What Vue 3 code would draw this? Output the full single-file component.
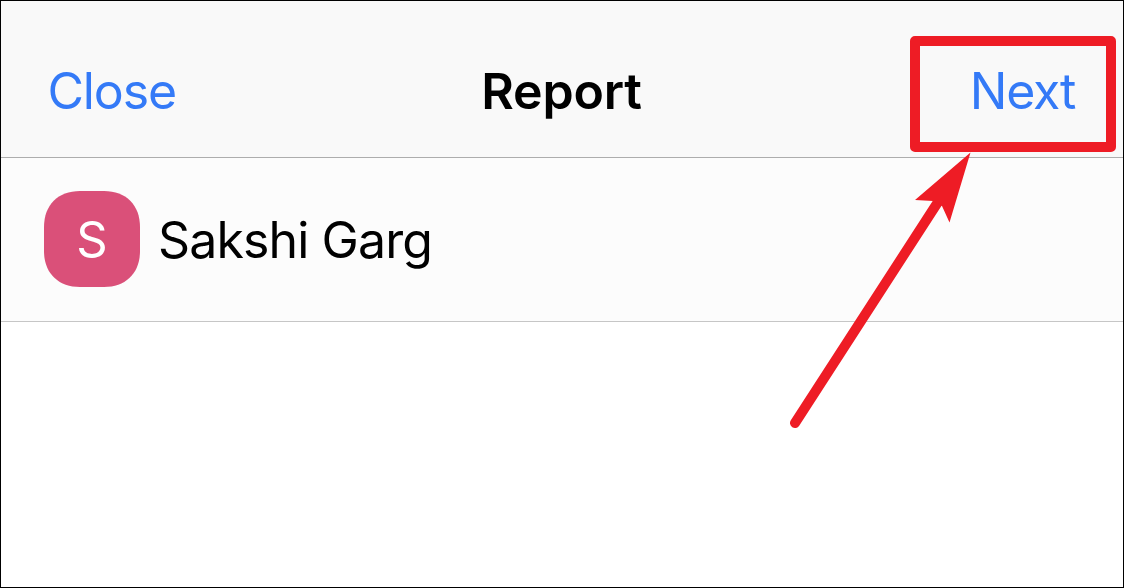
<script setup>
const person = { name: 'Sakshi Garg', initial: 'S' }
</script>

<template>
  <div class="screen">
    <header class="navbar">
      <a class="action close">Close</a>
      <h1 class="title">Report</h1>
      <a class="action next">Next</a>
    </header>
    <section class="person">
      <div class="avatar">
        <svg class="tile" viewBox="0 0 96 96">
          <path d="M0 48V36C0 14 14 0 36 0H60C82 0 96 14 96 36V60C96 82 82 96 60 96H36C14 96 0 82 0 60Z" fill="#da5079" />
        </svg>
        <span class="initial">{{ person.initial }}</span>
      </div>
      <span class="name">{{ person.name }}</span>
    </section>
    <svg class="annotation" viewBox="0 0 1124 588">
      <rect x="915" y="41" width="196" height="106" fill="none" stroke="#ee1c25" stroke-width="10" stroke-linejoin="round" />
      <path d="M795 423L938 202" stroke="#ee1c25" stroke-width="10" stroke-linecap="round" />
      <path d="M970.5 152.500L915 200L933 201L942 206L949.500 222.500Z" fill="#ee1c25" />
    </svg>
  </div>
</template>

<style>
body {
  margin: 0;
}
</style>

<style scoped>
.screen {
  position: relative;
  box-sizing: border-box;
  width: 1124px;
  height: 588px;
  border: 1px solid #000;
  background: #fff;
  color: #000;
  font: 400 50px/60px Inter, sans-serif;
  overflow: hidden;
}
.navbar {
  box-sizing: border-box;
  display: grid;
  grid-template-columns: 1fr auto 1fr;
  height: 157px;
  padding: 60px 48px 0 47px;
  background: #f9f9f9;
  border-bottom: 1px solid #adadad;
}
.action {
  color: #347af7;
}
.close {
  margin-left: -0.6px;
  letter-spacing: -1.1px;
}
.next {
  text-align: right;
  letter-spacing: -1.3px;
}
.title {
  margin: 0;
  font-size: 50px;
  font-weight: 600;
  letter-spacing: -0.15px;
}
.person {
  box-sizing: border-box;
  display: flex;
  gap: 18px;
  height: 164px;
  padding: 33px 43px 0;
  background: #fcfcfc;
  border-bottom: 1px solid #c6c6c6;
}
.avatar {
  display: grid;
  width: 96px;
  height: 96px;
}
.tile,
.initial {
  grid-area: 1 / 1;
}
.tile {
  width: 96px;
  height: 96px;
}
.initial {
  z-index: 1;
  padding-top: 19px;
  color: #fff;
  font-size: 49px;
  text-align: center;
}
.name {
  padding-top: 19px;
  letter-spacing: -0.88px;
}
.annotation {
  position: absolute;
  top: -1px;
  left: -1px;
  width: 1124px;
  height: 588px;
}
</style>
